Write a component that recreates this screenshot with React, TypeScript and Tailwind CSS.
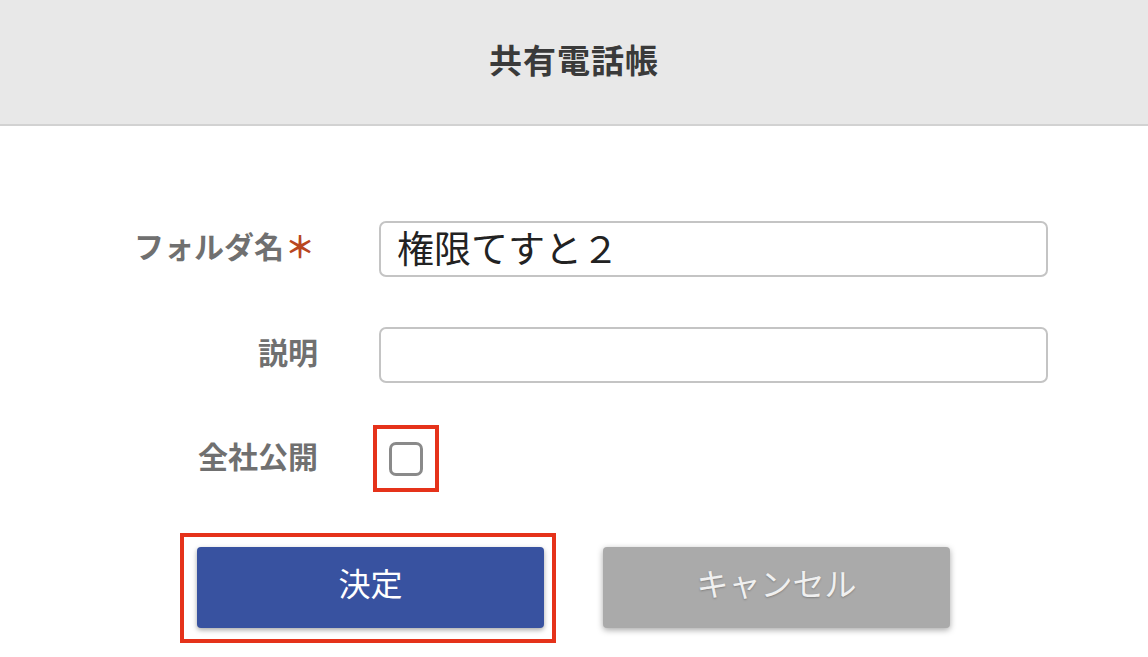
import React from 'react';

const font = { fontFamily: '"Noto Sans CJK JP", "Noto Sans", sans-serif' };

const App: React.FC = () => {
  return (
    <div className="min-h-screen w-[1148px] bg-white" style={font}>
      {/* Header */}
      <header className="flex h-[126px] items-center justify-center border-b-2 border-[#d2d2d2] bg-[#e8e8e8] pb-[4px]">
        <h1 className="text-[33px] font-bold tracking-[1px] text-[#3a3a3a]">共有電話帳</h1>
      </header>

      {/* Form */}
      <div className="pt-[95px]">
        <div className="flex h-[56px] items-center">
          <label className="flex w-[318px] items-center justify-end pb-[8px] pr-[3px] text-[30px] font-bold text-[#707070]">
            フォルダ名<span className="ml-[1px] text-[30px] leading-none text-[#b9461f]">＊</span>
          </label>
          <input
            defaultValue="権限てすと２"
            className="ml-[61px] h-[56px] w-[669px] rounded-[7px] border-2 border-[#c4c4c4] px-[16px] pb-[4px] text-[37px] text-[#222] outline-none"
            style={font}
          />
        </div>

        <div className="mt-[50px] flex h-[56px] items-center">
          <label className="w-[318px] pb-[8px] text-right text-[30px] font-bold text-[#707070]">説明</label>
          <input
            className="ml-[61px] h-[56px] w-[669px] rounded-[7px] border-2 border-[#c4c4c4] px-[16px] text-[34px] outline-none"
            style={font}
          />
        </div>

        <div className="mt-[42px] flex h-[67px] items-center">
          <label className="w-[318px] pb-[6px] text-right text-[30px] font-bold text-[#707070]">全社公開</label>
          <div className="ml-[55px] flex h-[67px] w-[66px] items-center justify-center border-[4px] border-[#e5321a]">
            <span className="block h-[34px] w-[34px] rounded-[7px] border-[3px] border-[#8a8a8a] bg-white" />
          </div>
        </div>

        {/* Buttons */}
        <div className="mt-[41px] flex items-start">
          <div className="ml-[180px] border-[4px] border-[#e5321a] pb-[11px] pl-[13px] pr-[8px] pt-[10px]">
            <button className="flex h-[81px] w-[347px] items-center justify-center rounded-[4px] bg-[#3852a0] pb-[12px] text-[32px] text-white shadow-[0_2px_5px_rgba(0,0,0,0.35)]">
              決定
            </button>
          </div>
          <button className="ml-[47px] mt-[14px] flex h-[81px] w-[347px] items-center justify-center rounded-[4px] bg-[#aaaaaa] pb-[12px] text-[32px] text-[#f0f0f0] shadow-[0_2px_6px_rgba(0,0,0,0.35)] [text-shadow:0_1px_2px_rgba(0,0,0,0.25)]">
            キャンセル
          </button>
        </div>
      </div>
    </div>
  );
};

export default App;
